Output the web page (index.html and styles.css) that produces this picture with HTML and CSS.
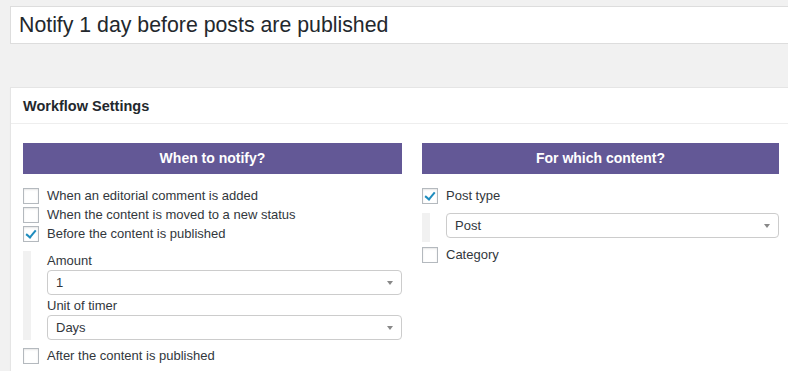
FILE: index.html
```html
<!DOCTYPE html>
<html>
<head>
  <title>Edit Notification Workflow</title>
  <link rel="stylesheet" href="styles.css">
</head>
<body>
  <div class="wrap">
    <div class="title-box">
      <input type="text" class="title-input" value="Notify 1 day before posts are published">
    </div>

    <div class="postbox">
      <h2 class="postbox-title">Workflow Settings</h2>
      <div class="postbox-inside">
        <div class="section">
          <h3 class="section-head">When to notify?</h3>
          <label class="check"><span class="box"></span>When an editorial comment is added</label>
          <label class="check"><span class="box"></span>When the content is moved to a new status</label>
          <label class="check"><span class="box checked"></span>Before the content is published</label>
          <div class="nested">
            <div class="field-label">Amount</div>
            <div class="select"><span>1</span><span class="arrow"></span></div>
            <div class="field-label">Unit of timer</div>
            <div class="select"><span>Days</span><span class="arrow"></span></div>
          </div>
          <label class="check"><span class="box"></span>After the content is published</label>
        </div>

        <div class="section">
          <h3 class="section-head">For which content?</h3>
          <label class="check"><span class="box checked"></span>Post type</label>
          <div class="nested nested-short">
            <div class="select"><span>Post</span><span class="arrow"></span></div>
          </div>
          <label class="check"><span class="box"></span>Category</label>
        </div>
      </div>
    </div>
  </div>
</body>
</html>
```

FILE: styles.css
```css
body {
  margin: 0;
  background: #f1f1f1;
  font-family: "Liberation Sans", Arial, sans-serif;
  color: #23282d;
  overflow: hidden;
}
.wrap {
  width: 782px;
  padding: 6px 0 0 10px;
}
.title-box {
  margin-bottom: 43px;
}
.title-input {
  box-sizing: border-box;
  width: 100%;
  height: 38px;
  padding: 0 8px;
  border: 1px solid #ddd;
  background: #fff;
  font-family: "Liberation Sans", Arial, sans-serif;
  font-size: 21.3px;
  color: #23282d;
  outline: none;
}
.postbox {
  background: #fff;
  border: 1px solid #e5e5e5;
  box-shadow: 0 1px 1px rgba(0,0,0,0.04);
}
.postbox-title {
  margin: 0;
  padding: 2px 12px 0 12px;
  height: 33px;
  line-height: 33px;
  font-size: 14.5px;
  font-weight: bold;
  border-bottom: 1px solid #eee;
}
.postbox-inside {
  display: grid;
  grid-template-columns: 379px 1fr;
  gap: 20px;
  padding: 19px 12px 20px 12px;
}
.section-head {
  margin: 0 0 12px 0;
  height: 31px;
  line-height: 31px;
  background: #635896;
  color: #fff;
  text-align: center;
  font-size: 14px;
  font-weight: bold;
}
.check {
  display: flex;
  align-items: center;
  height: 19px;
  font-size: 13px;
  color: #32373c;
}
.box {
  box-sizing: border-box;
  width: 16px;
  height: 16px;
  margin-right: 8px;
  border: 1px solid #b4b9be;
  background: #fff;
  box-shadow: inset 0 1px 2px rgba(0,0,0,0.1);
  position: relative;
}
.box.checked::after {
  content: "";
  position: absolute;
  left: 4px;
  top: 1px;
  width: 4px;
  height: 8px;
  border: solid #1e8cbe;
  border-width: 0 2px 2px 0;
  transform: rotate(40deg);
}
.nested {
  margin: 8px 0 6px 0;
  padding-left: 24px;
  border-left: 8px solid #f1f1f1;
}
.nested .select {
  margin-left: -8px;
}
.nested-short {
  margin: 8px 0 3px 0;
  height: 29px;
}
.field-label {
  font-size: 13px;
  color: #32373c;
  height: 19px;
  line-height: 19px;
  margin-left: -8px;
}
.select + .field-label {
  margin-top: 1px;
}
.select {
  box-sizing: border-box;
  height: 25px;
  padding: 0 8px;
  border: 1px solid #ccc;
  border-radius: 4px;
  display: flex;
  align-items: center;
  justify-content: space-between;
  font-size: 13px;
  color: #32373c;
}
.arrow {
  width: 0;
  height: 0;
  border-left: 3px solid transparent;
  border-right: 3px solid transparent;
  border-top: 4px solid #888;
}
```
